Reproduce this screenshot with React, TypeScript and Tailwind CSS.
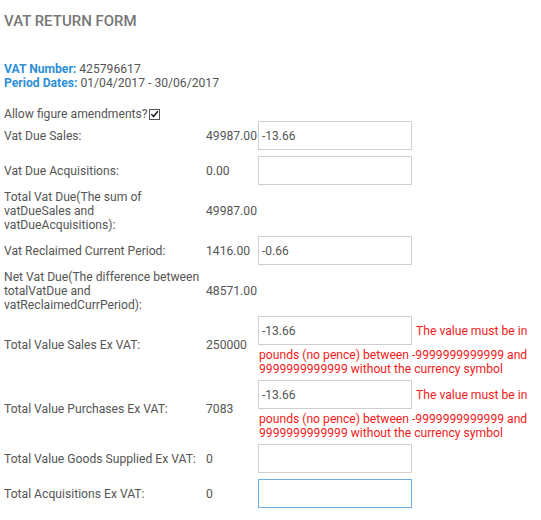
import React from "react";

const ERROR_TEXT = "The value must be in pounds (no pence) between -9999999999999 and 9999999999999 without the currency symbol";

type Row = {
  label: string;
  value: string;
  input?: string;
  error?: boolean;
  focused?: boolean;
};

const ROWS: Row[] = [
  { label: "Vat Due Sales:", value: "49987.00", input: "-13.66" },
  { label: "Vat Due Acquisitions:", value: "0.00", input: "" },
  { label: "Total Vat Due(The sum of vatDueSales and vatDueAcquisitions):", value: "49987.00" },
  { label: "Vat Reclaimed Current Period:", value: "1416.00", input: "-0.66" },
  { label: "Net Vat Due(The difference between totalVatDue and vatReclaimedCurrPeriod):", value: "48571.00" },
  { label: "Total Value Sales Ex VAT:", value: "250000", input: "-13.66", error: true },
  { label: "Total Value Purchases Ex VAT:", value: "7083", input: "-13.66", error: true },
  { label: "Total Value Goods Supplied Ex VAT:", value: "0", input: "" },
  { label: "Total Acquisitions Ex VAT:", value: "0", input: "", focused: true },
];

function Field({ value, focused }: { value: string; focused?: boolean }) {
  return (
    <input
      readOnly
      value={value}
      className={
        "w-[154px] h-[29px] my-[1.5px] shrink-0 px-[3px] text-[12px] text-[#555] bg-white outline-none border-[1.5px] " +
        (focused ? "border-[#6aaee6]" : "border-[#cfcfcf]")
      }
    />
  );
}

export default function App() {
  return (
    <div className="w-[541px] h-[520px] bg-white px-[4px] pt-[12px] text-[12.15px] leading-[14px] text-[#555] font-['Roboto','Liberation_Sans',sans-serif]">
      {/* Header */}
      <h1 className="text-[15px] leading-[18px] font-medium text-[#777]">VAT RETURN FORM</h1>

      <div className="mt-[32px]">
        <div>
          <span className="font-bold text-[#2d8fd5]">VAT Number:</span> 425796617
        </div>
        <div>
          <span className="font-bold text-[#2d8fd5]">Period Dates:</span> 01/04/2017 - 30/06/2017
        </div>
      </div>

      <div className="mt-[17px] flex items-center h-[14px]">
        <span>Allow figure amendments?</span>
        <span className="ml-[1px] w-[11px] h-[11px] border border-[#555] bg-white flex items-center justify-center">
          <svg width="10" height="10" viewBox="0 0 10 10">
            <path d="M1.5 5.2 L4 7.8 L8.8 1.8" fill="none" stroke="#111" strokeWidth="1.6" />
          </svg>
        </span>
      </div>

      {/* Figures */}
      <div className="mt-[-3px] grid grid-cols-[202px_52px_1fr]">
        {ROWS.map((row) => (
          <React.Fragment key={row.label}>
            <div className="py-[1.5px] flex items-center">{row.label}</div>
            <div className="py-[1.5px] flex items-center">{row.value}</div>
            <div className="py-[1.5px]">
              {row.input !== undefined && (
                <>
                  <div className="flex items-center">
                    <Field value={row.input} focused={row.focused} />
                    {row.error && (
                      <span className="ml-[4px] text-[#f41b1b]">The value must be in</span>
                    )}
                  </div>
                  {row.error && (
                    <p className="mt-[1px] pl-[1px] text-[#f41b1b] w-[274px]">
                      {ERROR_TEXT.replace("The value must be in ", "")}
                    </p>
                  )}
                </>
              )}
            </div>
          </React.Fragment>
        ))}
      </div>
    </div>
  );
}
